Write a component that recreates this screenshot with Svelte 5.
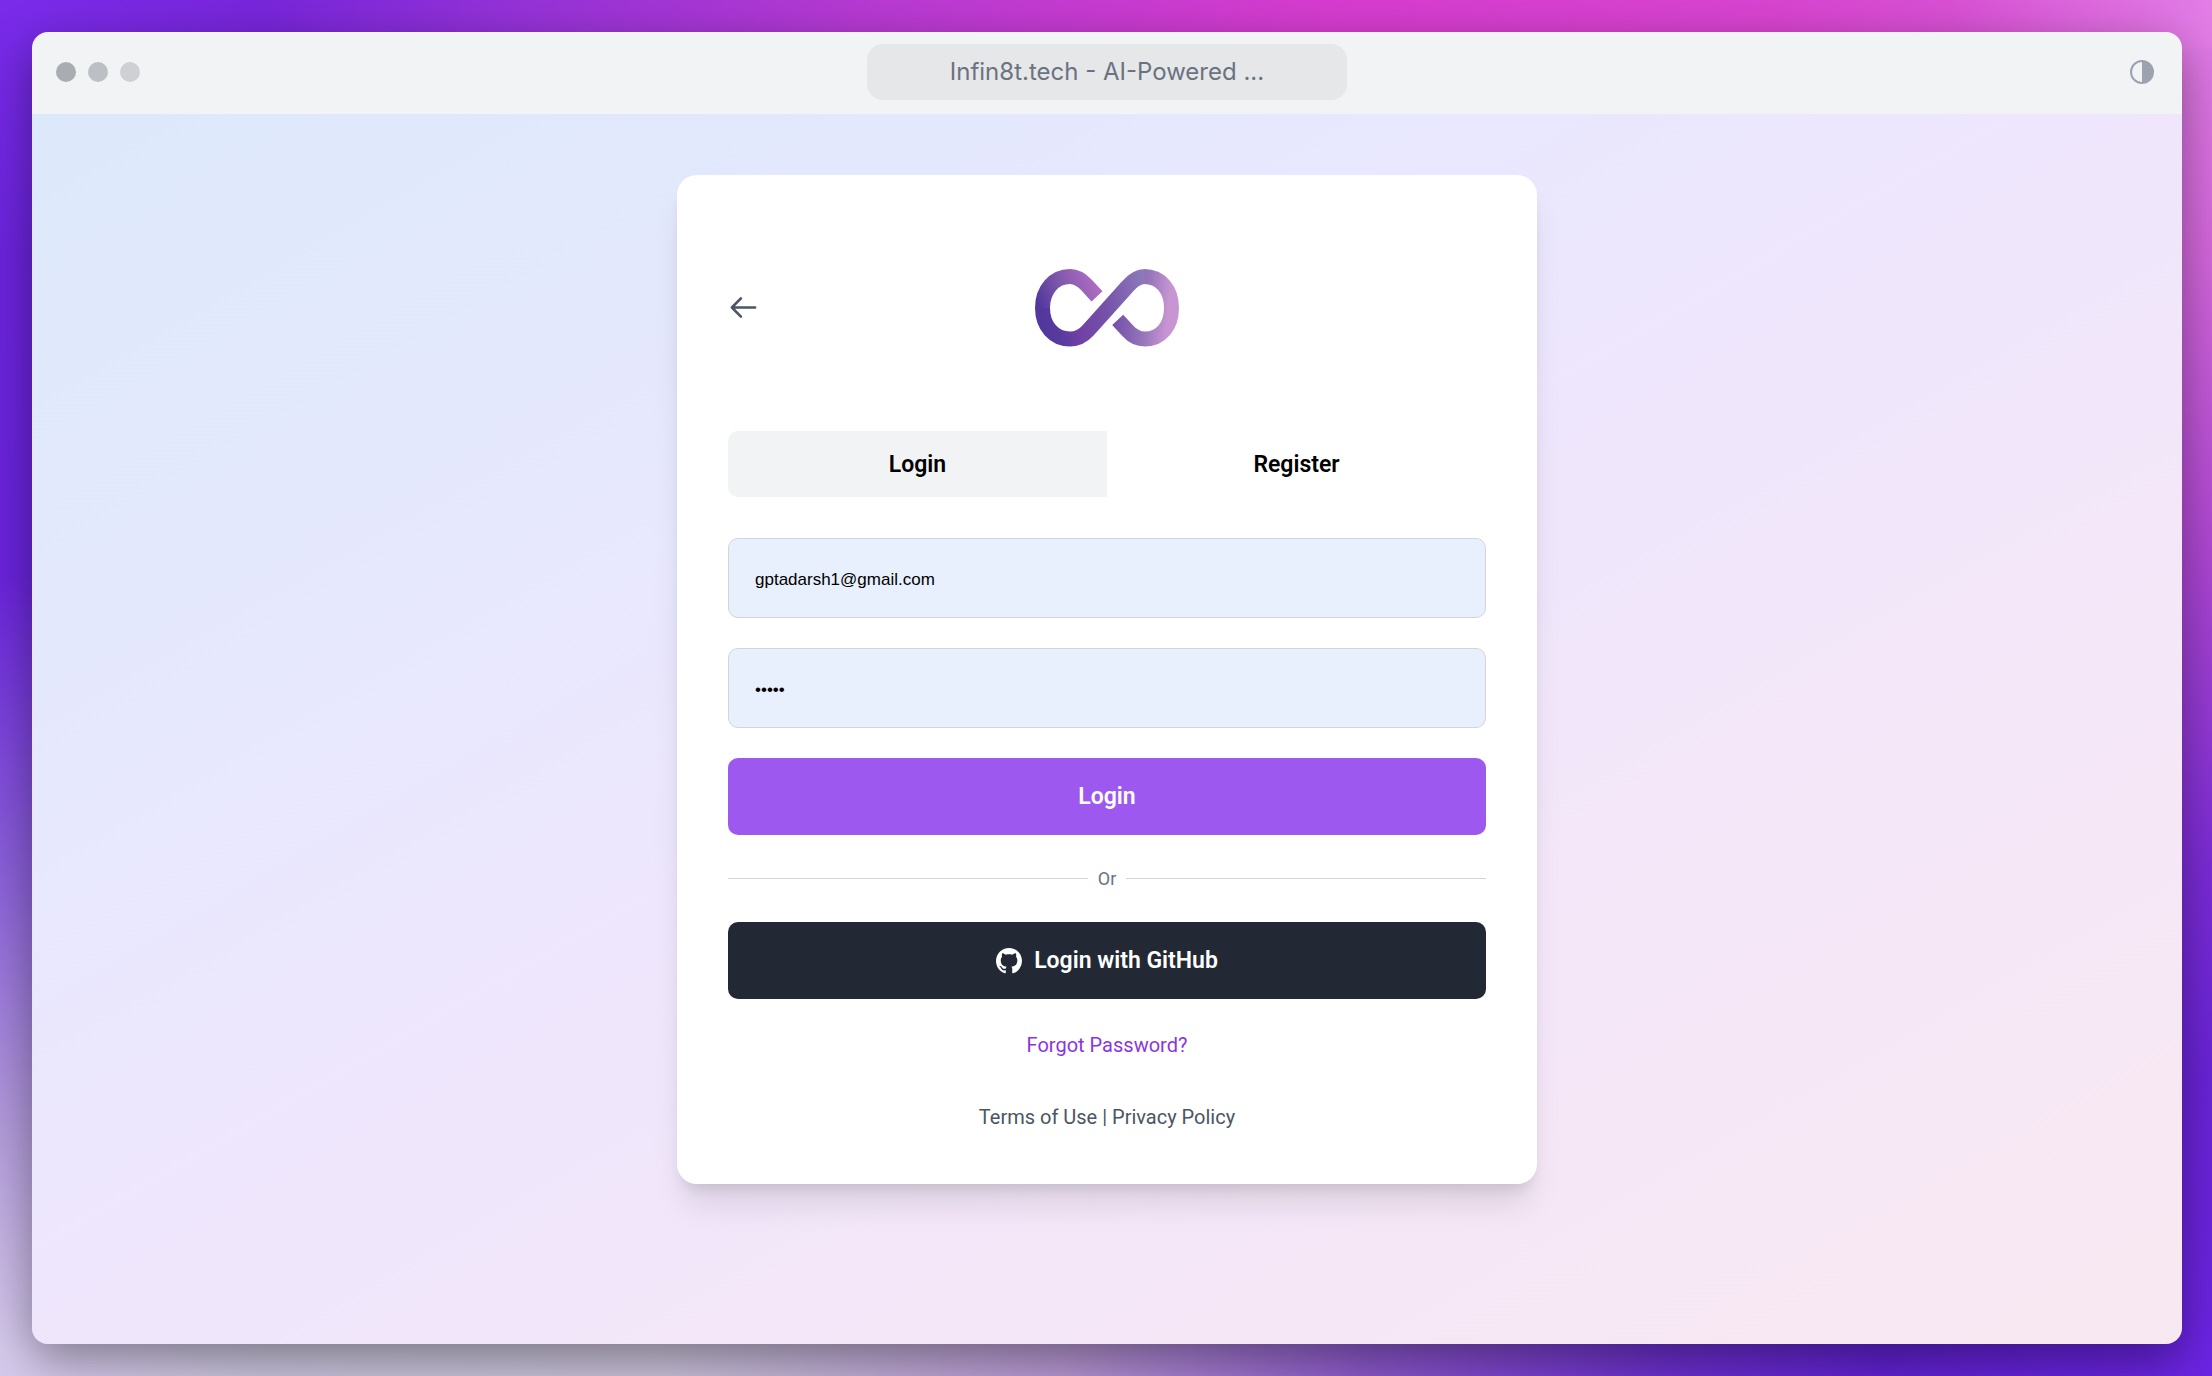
<script lang="ts">
  let mode = $state<'login' | 'register'>('login');
  let email = $state('gptadarsh1@gmail.com');
  let password = $state('admin');

  const tabs = [
    { id: 'login', label: 'Login' },
    { id: 'register', label: 'Register' }
  ] as const;

  function handleSubmit(event: SubmitEvent) {
    event.preventDefault();
    console.log('Submitting:', mode, email);
  }
</script>

<div class="desktop">
  <div class="window">
    <header class="title-bar">
      <div class="dots">
        <span class="dot close"></span>
        <span class="dot minimize"></span>
        <span class="dot expand"></span>
      </div>
      <div class="address">Infin8t.tech - AI-Powered ...</div>
      <button type="button" class="theme-button" aria-label="Toggle theme">
        <svg viewBox="0 0 24 24" fill="none">
          <circle cx="12" cy="12" r="11" stroke="currentColor" stroke-width="2" />
          <path d="M12 1a11 11 0 0 1 0 22z" fill="currentColor" />
        </svg>
      </button>
    </header>

    <main class="content">
      <section class="card">
        <div class="card-header">
          <button type="button" class="back-button" aria-label="Go back">
            <svg viewBox="0 0 24 24" fill="none" stroke="currentColor" stroke-width="2" stroke-linecap="round" stroke-linejoin="round">
              <path d="M10 19l-7-7m0 0l7-7m-7 7h18" />
            </svg>
          </button>
          <svg class="logo" viewBox="35 28 144 78" fill="none" stroke-width="15" role="img" aria-label="Infin8t">
            <defs>
              <linearGradient id="hook-left" gradientUnits="userSpaceOnUse" x1="42" y1="72" x2="100" y2="48">
                <stop offset="0" stop-color="#52389c" />
                <stop offset="0.45" stop-color="#8058ac" />
                <stop offset="1" stop-color="#af6dc2" />
              </linearGradient>
              <linearGradient id="band" gradientUnits="userSpaceOnUse" x1="38" y1="75" x2="146" y2="50">
                <stop offset="0" stop-color="#52389c" />
                <stop offset="0.14" stop-color="#563a9d" />
                <stop offset="0.32" stop-color="#7040a4" />
                <stop offset="0.6" stop-color="#7551a9" />
                <stop offset="1" stop-color="#8c78ba" />
              </linearGradient>
              <linearGradient id="hook-right" gradientUnits="userSpaceOnUse" x1="116" y1="66" x2="174" y2="72">
                <stop offset="0" stop-color="#7450a8" />
                <stop offset="0.5" stop-color="#9474ba" />
                <stop offset="0.9" stop-color="#c795d2" />
              </linearGradient>
            </defs>
            <path stroke="url(#hook-left)" d="M97 55.3L87 44.5C82 39 77 35.5 70 35.5C54 35.5 42.5 49 42.5 67v1" />
            <path stroke="url(#hook-right)" d="M144 35.5C161 35.5 171.5 49 171.5 67S161 98 145 98C137 98 132 94.5 128 90L117.7 78.8" />
            <path stroke="url(#band)" d="M42.5 67C42.5 85 54 98 70 98C78 98 83 95 88 89.5L127 46C132 40 137 35.5 145 35.5" />
          </svg>
        </div>

        <div class="tabs" role="tablist">
          {#each tabs as tab (tab.id)}
            <button
              type="button"
              role="tab"
              class="tab"
              class:active={mode === tab.id}
              aria-selected={mode === tab.id}
              onclick={() => (mode = tab.id)}
            >
              {tab.label}
            </button>
          {/each}
        </div>

        <form onsubmit={handleSubmit}>
          <input type="email" aria-label="Email" bind:value={email} />
          <input type="password" aria-label="Password" bind:value={password} />
          <button type="submit" class="submit-button">Login</button>
        </form>

        <div class="divider"><span>Or</span></div>

        <button type="button" class="github-button">
          <svg viewBox="0 0 16 16" fill="currentColor">
            <path d="M8 0C3.58 0 0 3.58 0 8c0 3.54 2.29 6.53 5.47 7.59.4.07.55-.17.55-.38 0-.19-.01-.82-.01-1.49-2.01.37-2.53-.49-2.69-.94-.09-.23-.48-.94-.82-1.13-.28-.15-.68-.52-.01-.53.63-.01 1.08.58 1.23.82.72 1.21 1.87.87 2.33.66.07-.52.28-.87.51-1.07-1.78-.2-3.64-.89-3.64-3.95 0-.87.31-1.59.82-2.15-.08-.2-.36-1.02.08-2.12 0 0 .67-.21 2.2.82.64-.18 1.32-.27 2-.27s1.36.09 2 .27c1.53-1.04 2.2-.82 2.2-.82.44 1.1.16 1.92.08 2.12.51.56.82 1.27.82 2.15 0 3.07-1.87 3.75-3.65 3.95.29.25.54.73.54 1.48 0 1.07-.01 1.93-.01 2.2 0 .21.15.46.55.38A8.01 8.01 0 0 0 16 8c0-4.42-3.58-8-8-8z" />
          </svg>
          Login with GitHub
        </button>

        <a class="forgot" href="#forgot">Forgot Password?</a>

        <p class="legal"><a href="#terms">Terms of Use</a> | <a href="#privacy">Privacy Policy</a></p>
      </section>
    </main>
  </div>
</div>

<style>
  :global(body) {
    margin: 0;
  }

  .desktop {
    box-sizing: border-box;
    display: flex;
    min-height: 100vh;
    padding: 32px 30px 32px 32px;
    font-family: Roboto, 'Liberation Sans', sans-serif;
    /* only the rim around the window shows, so each side has its own strip */
    background:
      linear-gradient(#7a2bea, #6c24de 18%, #6a24dc 42%, #9068da 66%, #b49cdc 82%, #d6caec 98%) left / 48px 100% no-repeat,
      linear-gradient(to right, #7a2bea, #7826da 12%, #9432d8 23%, #b83ad2 40%, #d63ccf 60%, #d844d0 80%, #d850d4 88%, #e27de6) top / 100% 48px no-repeat,
      linear-gradient(to right, #d6caec 3%, #ccc6de 12%, #ccc4dc 30%, #b898d4 48%, #8c58cc 62%, #6e30d0 75%, #6222d4 85%, #6c24e4) bottom / 100% 48px no-repeat,
      linear-gradient(#e27de6, #d468dc 18%, #b048d4 40%, #7c2cd8 63%, #6a24d8 78%, #6c24e4) right / 48px 100% no-repeat;
  }

  .window {
    flex: 1;
    display: flex;
    flex-direction: column;
    min-width: 0;
    border-radius: 16px;
    overflow: hidden;
    box-shadow: 0 16px 48px rgba(0, 0, 0, 0.4);
  }

  .title-bar {
    display: grid;
    grid-template-columns: 1fr minmax(0, 480px) 1fr;
    align-items: center;
    padding: 12px 24px 14px;
    background-color: #f2f3f5;
  }

  .dots {
    display: flex;
    gap: 12px;
  }

  .dot {
    width: 20px;
    height: 20px;
    border-radius: 50%;
  }

  .close {
    background-color: #a9adb2;
  }

  .minimize {
    background-color: #bcc0c5;
  }

  .expand {
    background-color: #cfd0d4;
  }

  .address {
    border-radius: 16px;
    background-color: #e6e7e9;
    color: #6b7280;
    font-family: Inter, sans-serif;
    font-size: 24px;
    line-height: 56px;
    text-align: center;
    white-space: nowrap;
  }

  .theme-button {
    justify-self: end;
    display: flex;
    padding: 4px;
    border: none;
    background: none;
    color: #9ca3af;
  }

  .theme-button svg {
    width: 24px;
    height: 24px;
  }

  .content {
    flex: 1;
    display: flex;
    align-items: flex-start;
    justify-content: center;
    padding: 61px 24px;
    background: linear-gradient(to bottom right, #dce9fa, #e7e8fe 30%, #efe6fc 50%, #f4e7f8 70%, #f8e8f1);
  }

  .card {
    box-sizing: border-box;
    display: flex;
    flex-direction: column;
    width: 100%;
    max-width: 860px;
    padding: 51px;
    border-radius: 20px;
    background-color: white;
    box-shadow: 0 26px 32px -6px rgba(0, 0, 0, 0.1), 0 10px 13px -6px rgba(0, 0, 0, 0.1);
  }

  .card-header {
    display: grid;
    grid-template-columns: 1fr auto 1fr;
    align-items: center;
    height: 163px;
    margin-bottom: 42px;
  }

  .back-button {
    justify-self: start;
    display: flex;
    padding: 0;
    border: none;
    background: none;
    color: #4b5563;
  }

  .back-button svg {
    width: 31px;
    height: 31px;
  }

  .logo {
    width: 144px;
    height: 78px;
  }

  .tabs {
    display: flex;
    margin-bottom: 41px;
    border-radius: 10px;
    overflow: hidden;
  }

  .tab,
  .submit-button,
  .github-button {
    border: none;
    font-family: inherit;
    font-size: 23px;
    font-weight: 600;
    cursor: pointer;
  }

  .tab {
    flex: 1;
    height: 66px;
    background-color: white;
    color: black;
  }

  .tab.active {
    background-color: #f2f3f5;
  }

  form {
    display: flex;
    flex-direction: column;
    gap: 30px;
  }

  input {
    box-sizing: border-box;
    height: 80px;
    padding: 3px 26px 0;
    border: 1px solid #d1d5db;
    border-radius: 10px;
    background-color: #e8effd;
    color: black;
    font-family: 'Liberation Sans', Arial, sans-serif;
    font-size: 17px;
  }

  .submit-button,
  .github-button {
    height: 77px;
    border-radius: 10px;
    color: white;
  }

  .submit-button {
    background-color: #9d58ef;
  }

  .divider {
    display: flex;
    align-items: center;
    gap: 10px;
    margin: 30px 0;
    color: #6b7280;
    font-size: 18px;
    line-height: 27px;
  }

  .divider::before,
  .divider::after {
    content: '';
    flex: 1;
    height: 1px;
    background-color: #d1d5db;
  }

  .github-button {
    display: flex;
    align-items: center;
    justify-content: center;
    gap: 12px;
    background-color: #222935;
  }

  .github-button svg {
    width: 26px;
    height: 26px;
  }

  .forgot,
  .legal {
    font-size: 20px;
    line-height: 31px;
    text-align: center;
  }

  .forgot {
    align-self: center;
    margin-top: 31px;
    color: #8b35e0;
    text-decoration: none;
  }

  .legal {
    margin: 41px 0 0;
    color: #4b5563;
  }

  .legal a {
    color: inherit;
    text-decoration: none;
  }
</style>
